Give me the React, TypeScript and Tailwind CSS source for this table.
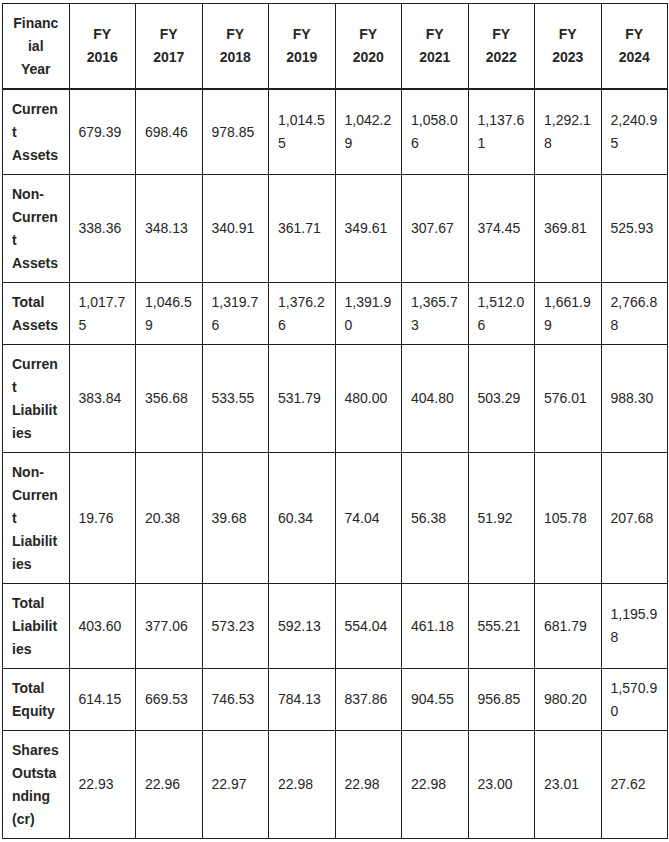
const years = ['2016', '2017', '2018', '2019', '2020', '2021', '2022', '2023', '2024']

const rows: { label: string; values: string[] }[] = [
  { label: 'Current Assets', values: ['679.39', '698.46', '978.85', '1,014.55', '1,042.29', '1,058.06', '1,137.61', '1,292.18', '2,240.95'] },
  { label: 'Non-Current Assets', values: ['338.36', '348.13', '340.91', '361.71', '349.61', '307.67', '374.45', '369.81', '525.93'] },
  { label: 'Total Assets', values: ['1,017.75', '1,046.59', '1,319.76', '1,376.26', '1,391.90', '1,365.73', '1,512.06', '1,661.99', '2,766.88'] },
  { label: 'Current Liabilities', values: ['383.84', '356.68', '533.55', '531.79', '480.00', '404.80', '503.29', '576.01', '988.30'] },
  { label: 'Non-Current Liabilities', values: ['19.76', '20.38', '39.68', '60.34', '74.04', '56.38', '51.92', '105.78', '207.68'] },
  { label: 'Total Liabilities', values: ['403.60', '377.06', '573.23', '592.13', '554.04', '461.18', '555.21', '681.79', '1,195.98'] },
  { label: 'Total Equity', values: ['614.15', '669.53', '746.53', '784.13', '837.86', '904.55', '956.85', '980.20', '1,570.90'] },
  { label: 'Shares Outstanding (cr)', values: ['22.93', '22.96', '22.97', '22.98', '22.98', '22.98', '23.00', '23.01', '27.62'] },
]

// words wrap first, then long ones get chopped (like the source page)
const cell = 'border border-[#1f1f1f] px-[9px] py-[7.5px] [overflow-wrap:anywhere] align-middle'

export default function App() {
  return (
    <div className="bg-white min-h-[842px] pt-[3px] pl-[2px]" style={{ fontFamily: '"Liberation Sans", Arial, sans-serif' }}>
      <table className="w-[666px] table-fixed border-collapse text-[14px] leading-[23px] text-[#262626]">
        <thead>
          <tr>
            <th className={`${cell} text-center font-bold border-b-2`}>Financial Year</th>
            {years.map((y) => (
              <th key={y} className={`${cell} text-center font-bold border-b-2`}>
                FY {y}
              </th>
            ))}
          </tr>
        </thead>
        <tbody>
          {rows.map((r) => (
            <tr key={r.label}>
              <td className={`${cell} font-bold`}>{r.label}</td>
              {r.values.map((v, i) => (
                <td key={i} className={cell}>
                  {v}
                </td>
              ))}
            </tr>
          ))}
        </tbody>
      </table>
    </div>
  )
}
